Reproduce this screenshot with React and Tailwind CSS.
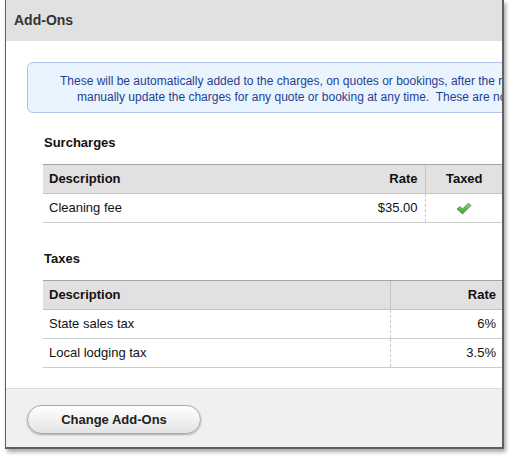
import React from 'react'

const SURCHARGES = [{ desc: 'Cleaning fee', rate: '$35.00', taxed: true }]
const TAXES = [
  { desc: 'State sales tax', rate: '6%' },
  { desc: 'Local lodging tax', rate: '3.5%' },
]

function Check() {
  return (
    <svg width="16" height="13" viewBox="0 0 16 13" className="inline-block">
      <defs>
        <linearGradient id="ck" x1="0" y1="0" x2="0" y2="1">
          <stop offset="0" stopColor="#8fd47c" />
          <stop offset="1" stopColor="#3f9a36" />
        </linearGradient>
      </defs>
      <path d="M1 7 L4 4.5 L6.5 7 L12.5 1 L15 3.5 L6.5 12 Z" fill="url(#ck)" stroke="#4a8f3e" strokeWidth="0.8" strokeLinejoin="round" />
    </svg>
  )
}

export default function App() {
  const TH = 'h-[29px] bg-[#e1e1e1] border-t border-[#a3a3a3] border-b border-b-[#c4c4c4] text-[13px] font-bold text-[#111]'
  const TD = 'h-[29px] border-b border-[#cccccc] text-[13px] text-[#111]'
  const DASH = 'border-l border-l-[#c8c8c8] [border-left-style:dashed]'

  return (
    <div className="w-[510px] h-[456px] bg-white pl-[5px] font-['Liberation_Sans',Arial,sans-serif]">
      <div className="w-[499px] border-l border-r-2 border-b-2 border-[#5f5f5f] shadow-[2px_3px_4px_rgba(0,0,0,0.35)] overflow-hidden">
        {/* Header */}
        <div className="h-[41px] bg-[#e1e1e1] flex items-center pl-[8px]">
          <h1 className="text-[14px] font-bold text-[#333]">Add-Ons</h1>
        </div>

        {/* Body */}
        <div className="bg-white pt-[21px] pb-[20px]">
          <div className="ml-[21px] w-[560px] h-[51px] rounded-[6px] border border-[#a9c5ea] bg-[#eaf4fe] pt-[10px] text-[12px] leading-[16px] text-[#1e3f94] whitespace-pre">
            <p className="pl-[32px]">These will be automatically added to the charges, on quotes or bookings, after the rental charges are calculated.</p>
            <p className="pl-[49px]">manually update the charges for any quote or booking at any time.  These are not included in the base rate.</p>
          </div>

          <h2 className="ml-[38px] mt-[22px] text-[13px] leading-[16px] font-bold text-[#111]">Surcharges</h2>
          <table className="ml-[37px] mt-[13px] w-[460px] border-collapse">
            <thead>
              <tr>
                <th className={`${TH} text-left pl-[6px]`}>Description</th>
                <th className={`${TH} w-[100px] text-right pr-[7px]`}>Rate</th>
                <th className={`${TH} w-[78px] text-center border-l border-l-[#c4c4c4]`}>Taxed</th>
              </tr>
            </thead>
            <tbody>
              {SURCHARGES.map((s, i) => (
                <tr key={i}>
                  <td className={`${TD} pl-[6px]`}>{s.desc}</td>
                  <td className={`${TD} text-right pr-[7px]`}>{s.rate}</td>
                  <td className={`${TD} text-center ${DASH}`}>
                    {s.taxed && <Check />}
                  </td>
                </tr>
              ))}
            </tbody>
          </table>

          <h2 className="ml-[38px] mt-[28px] text-[13px] leading-[16px] font-bold text-[#111]">Taxes</h2>
          <table className="ml-[37px] mt-[13px] w-[460px] border-collapse">
            <thead>
              <tr>
                <th className={`${TH} text-left pl-[6px]`}>Description</th>
                <th className={`${TH} w-[113px] text-right pr-[7px] border-l border-l-[#c4c4c4]`}>Rate</th>
              </tr>
            </thead>
            <tbody>
              {TAXES.map((t, i) => (
                <tr key={i}>
                  <td className={`${TD} pl-[6px]`}>{t.desc}</td>
                  <td className={`${TD} text-right pr-[7px] ${DASH}`}>{t.rate}</td>
                </tr>
              ))}
            </tbody>
          </table>
        </div>

        {/* Footer */}
        <div className="h-[59px] bg-[#f0f0f0] border-t border-[#dcdcdc] pt-[16px] pl-[21px]">
          <button className="w-[174px] h-[29px] rounded-full border border-[#a8a8a8] bg-gradient-to-b from-white to-[#e4e4e4] shadow-[0_1px_2px_rgba(0,0,0,0.3)] text-[13px] font-bold text-[#222]">
            Change Add-Ons
          </button>
        </div>
      </div>
    </div>
  )
}
